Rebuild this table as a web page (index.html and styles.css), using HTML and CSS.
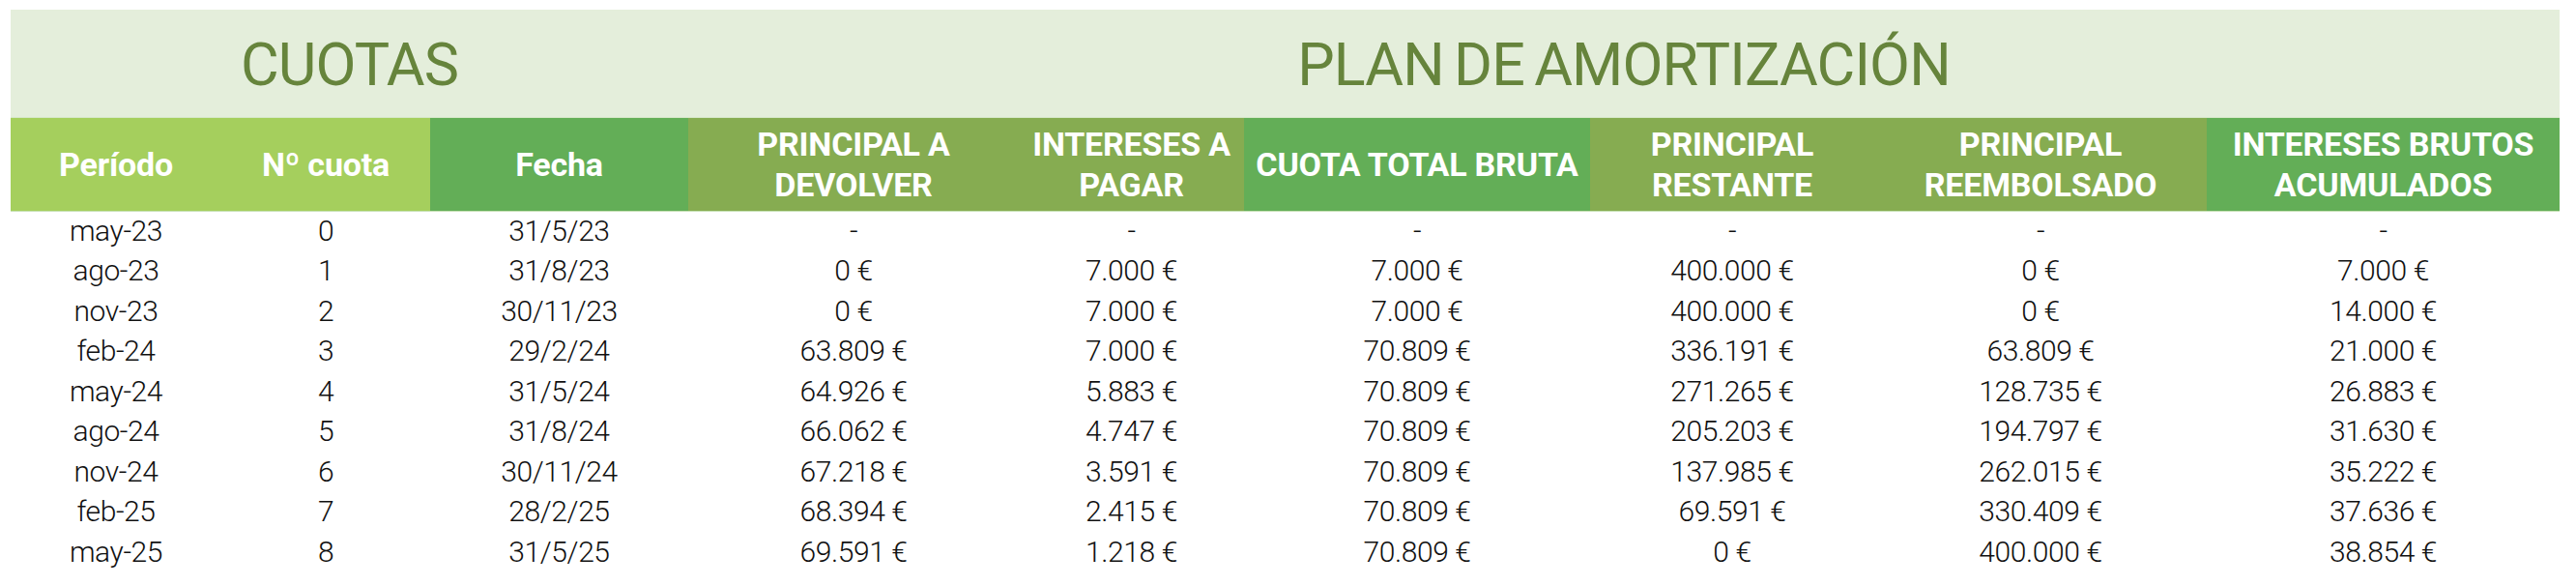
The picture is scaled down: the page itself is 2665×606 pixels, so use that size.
FILE: index.html
```html
<!DOCTYPE html>
<html lang="es">
<head>
<meta charset="utf-8">
<title>Plan de amortización</title>
<link rel="stylesheet" href="styles.css">
</head>
<body>
<div class="sheet">
  <div class="title span3">CUOTAS</div>
  <div class="title span6">PLAN DE AMORTIZACIÓN</div>

  <div class="hd c-light">Período</div>
  <div class="hd c-light">Nº cuota</div>
  <div class="hd c-green">Fecha</div>
  <div class="hd c-olive">PRINCIPAL A<br>DEVOLVER</div>
  <div class="hd c-olive">INTERESES A<br>PAGAR</div>
  <div class="hd c-green">CUOTA TOTAL BRUTA</div>
  <div class="hd c-olive">PRINCIPAL<br>RESTANTE</div>
  <div class="hd c-olive">PRINCIPAL<br>REEMBOLSADO</div>
  <div class="hd c-green">INTERESES BRUTOS<br>ACUMULADOS</div>

  <div class="cell">may-23</div><div class="cell">0</div><div class="cell">31/5/23</div><div class="cell">-</div><div class="cell">-</div><div class="cell">-</div><div class="cell">-</div><div class="cell">-</div><div class="cell">-</div>
  <div class="cell">ago-23</div><div class="cell">1</div><div class="cell">31/8/23</div><div class="cell">0 €</div><div class="cell">7.000 €</div><div class="cell">7.000 €</div><div class="cell">400.000 €</div><div class="cell">0 €</div><div class="cell">7.000 €</div>
  <div class="cell">nov-23</div><div class="cell">2</div><div class="cell">30/11/23</div><div class="cell">0 €</div><div class="cell">7.000 €</div><div class="cell">7.000 €</div><div class="cell">400.000 €</div><div class="cell">0 €</div><div class="cell">14.000 €</div>
  <div class="cell">feb-24</div><div class="cell">3</div><div class="cell">29/2/24</div><div class="cell">63.809 €</div><div class="cell">7.000 €</div><div class="cell">70.809 €</div><div class="cell">336.191 €</div><div class="cell">63.809 €</div><div class="cell">21.000 €</div>
  <div class="cell">may-24</div><div class="cell">4</div><div class="cell">31/5/24</div><div class="cell">64.926 €</div><div class="cell">5.883 €</div><div class="cell">70.809 €</div><div class="cell">271.265 €</div><div class="cell">128.735 €</div><div class="cell">26.883 €</div>
  <div class="cell">ago-24</div><div class="cell">5</div><div class="cell">31/8/24</div><div class="cell">66.062 €</div><div class="cell">4.747 €</div><div class="cell">70.809 €</div><div class="cell">205.203 €</div><div class="cell">194.797 €</div><div class="cell">31.630 €</div>
  <div class="cell">nov-24</div><div class="cell">6</div><div class="cell">30/11/24</div><div class="cell">67.218 €</div><div class="cell">3.591 €</div><div class="cell">70.809 €</div><div class="cell">137.985 €</div><div class="cell">262.015 €</div><div class="cell">35.222 €</div>
  <div class="cell">feb-25</div><div class="cell">7</div><div class="cell">28/2/25</div><div class="cell">68.394 €</div><div class="cell">2.415 €</div><div class="cell">70.809 €</div><div class="cell">69.591 €</div><div class="cell">330.409 €</div><div class="cell">37.636 €</div>
  <div class="cell">may-25</div><div class="cell">8</div><div class="cell">31/5/25</div><div class="cell">69.591 €</div><div class="cell">1.218 €</div><div class="cell">70.809 €</div><div class="cell">0 €</div><div class="cell">400.000 €</div><div class="cell">38.854 €</div>
</div>
</body>
</html>
```

FILE: styles.css
```css
html, body {
  margin: 0;
  background: #ffffff;
}
body {
  padding: 10px 0 0 11px;
  font-family: Roboto, "Liberation Sans", sans-serif;
}
.sheet {
  display: grid;
  grid-template-columns: 218px 216px 267px 342px 233px 358px 294px 344px 365px;
  grid-template-rows: 112px 97px repeat(9, 41.5px);
}
.title {
  background: #e4eedb;
  color: #66843c;
  font-size: 61px;
  font-weight: 400;
  letter-spacing: -0.9px;
  word-spacing: -4px;
  display: flex;
  align-items: center;
  justify-content: center;
  padding-top: 2px;
  border-bottom: 1px solid #d6e7c8;
  box-sizing: border-box;
}
.span3 { grid-column: span 3; }
.span6 { grid-column: span 6; }
.hd {
  color: #ffffff;
  font-weight: 700;
  font-size: 34px;
  line-height: 42px;
  text-align: center;
  display: flex;
  align-items: center;
  justify-content: center;
  border-bottom: 1px solid #c9e2b8;
  box-sizing: border-box;
  letter-spacing: -0.2px;
}
.c-light { background: #a5cf5d; }
.c-green { background: #63ae57; }
.c-olive { background: #86ac51; }
.cell {
  font-size: 30px;
  font-weight: 300;
  color: #111111;
  display: flex;
  align-items: center;
  justify-content: center;
  padding-bottom: 3px;
  box-sizing: border-box;
  letter-spacing: -0.4px;
}
```
